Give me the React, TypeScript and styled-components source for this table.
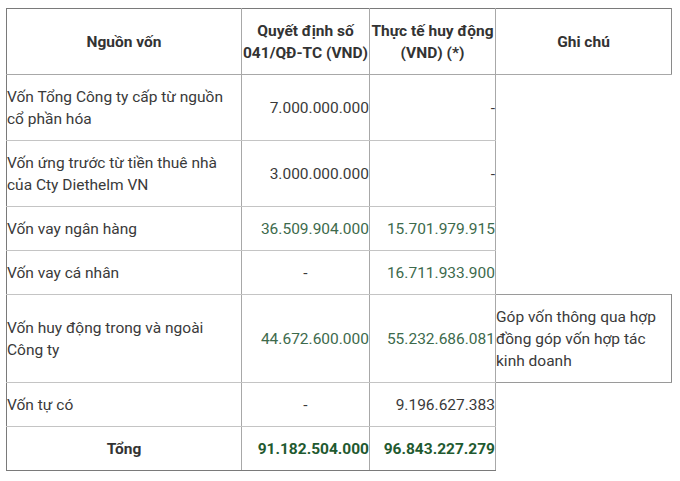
import React from 'react';
import styled, { createGlobalStyle } from 'styled-components';

const GlobalStyle = createGlobalStyle`
  html, body {
    margin: 0;
    padding: 0;
    background: #ffffff;
  }
  body {
    font-family: Roboto, "Noto Sans", "Liberation Sans", sans-serif;
  }
`;

const Page = styled.div`
  padding: 8px 0 0 6px;
`;

const Table = styled.table`
  border-collapse: collapse;
  table-layout: fixed;
  font-size: 15.5px;
  line-height: 22px;
  color: #3a3a3a;
`;

const HeadCell = styled.th<{ $w: number }>`
  width: ${(p) => p.$w}px;
  padding: 11px 0 10px;
  border: 1px solid #a8a8a8;
  border-top-color: #7a7a7a;
  font-weight: 700;
  text-align: center;
  vertical-align: middle;
  color: #333333;

  &:first-child {
    border-left-color: #7a7a7a;
  }
  &:last-child {
    border-right-color: #8a8a8a;
  }
`;

const Cell = styled.td<{ $align?: 'left' | 'right' | 'center'; $tone?: 'text' | 'green' | 'total'; $note?: boolean }>`
  padding: 11px 0 10px;
  border: 1px solid ${(p) => (p.$note ? '#9a9a9a' : '#c4c4c4')};
  border-left-color: #a8a8a8;
  border-right-color: ${(p) => (p.$note ? '#8a8a8a' : '#a8a8a8')};
  text-align: ${(p) => p.$align ?? 'left'};
  vertical-align: ${(p) => (p.$note ? 'top' : 'middle')};
  font-weight: ${(p) => (p.$tone === 'total' ? 700 : 400)};
  color: ${(p) => (p.$tone === 'green' ? '#3d6a4c' : p.$tone === 'total' ? '#1f5a30' : '#3a3a3a')};
  padding-right: ${(p) => (p.$align ? '0' : '6px')};

  &:first-child {
    border-left-color: #7a7a7a;
  }
`;

const Row = styled.tr<{ $last?: boolean }>`
  ${(p) =>
    p.$last &&
    `
    td { border-bottom-color: #7a7a7a; }
  `}
`;

type Num = { v: string; green?: boolean };

const rows: { label: string; a: Num; b: Num; note?: string }[] = [
  { label: 'Vốn Tổng Công ty cấp từ nguồn cổ phần hóa', a: { v: '7.000.000.000' }, b: { v: '-' } },
  { label: 'Vốn ứng trước từ tiền thuê nhà của Cty Diethelm VN', a: { v: '3.000.000.000' }, b: { v: '-' } },
  { label: 'Vốn vay ngân hàng', a: { v: '36.509.904.000', green: true }, b: { v: '15.701.979.915', green: true } },
  { label: 'Vốn vay cá nhân', a: { v: '-' }, b: { v: '16.711.933.900', green: true } },
  {
    label: 'Vốn huy động trong và ngoài Công ty',
    a: { v: '44.672.600.000', green: true },
    b: { v: '55.232.686.081', green: true },
    note: 'Góp vốn thông qua hợp đồng góp vốn hợp tác kinh doanh',
  },
  { label: 'Vốn tự có', a: { v: '-' }, b: { v: '9.196.627.383' } },
];

export default function App() {
  return (
    <Page>
      <GlobalStyle />
      <Table>
        <thead>
          <tr>
            <HeadCell $w={234}>Nguồn vốn</HeadCell>
            <HeadCell $w={127}>Quyết định số 041/QĐ-TC (VND)</HeadCell>
            <HeadCell $w={125}>Thực tế huy động (VND) (*)</HeadCell>
            <HeadCell $w={175}>Ghi chú</HeadCell>
          </tr>
        </thead>
        <tbody>
          {rows.map((r) => (
            <Row key={r.label}>
              <Cell>{r.label}</Cell>
              <Cell $align={r.a.v === '-' ? 'center' : 'right'} $tone={r.a.green ? 'green' : 'text'}>
                {r.a.v}
              </Cell>
              <Cell $align="right" $tone={r.b.green ? 'green' : 'text'}>
                {r.b.v}
              </Cell>
              {r.note && <Cell $note>{r.note}</Cell>}
            </Row>
          ))}
          <Row $last>
            <Cell $align="center" $tone="total" style={{ color: '#333333' }}>
              Tổng
            </Cell>
            <Cell $align="right" $tone="total">
              91.182.504.000
            </Cell>
            <Cell $align="right" $tone="total">
              96.843.227.279
            </Cell>
          </Row>
        </tbody>
      </Table>
    </Page>
  );
}
